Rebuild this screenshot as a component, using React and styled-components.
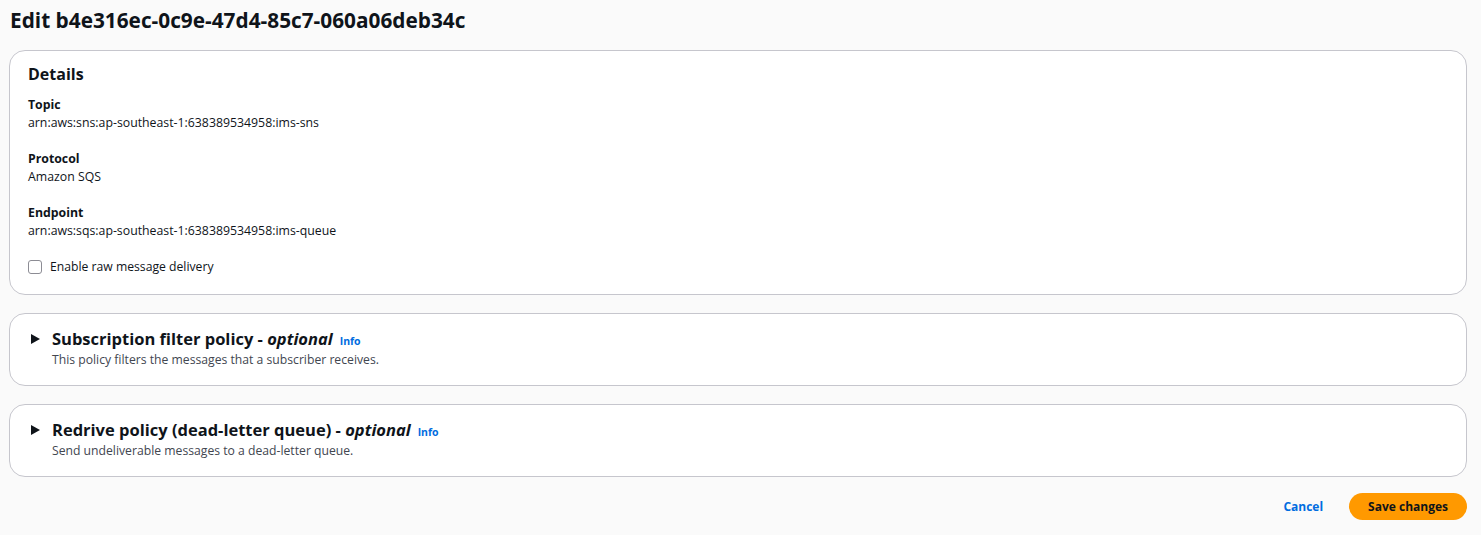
import styled, { createGlobalStyle } from "styled-components";

const Global = createGlobalStyle`
  body {
    margin: 0;
    background: #fafafa;
    font-family: "Open Sans", "Noto Sans", sans-serif;
    color: #0f141a;
  }
`;

const Page = styled.div`
  padding: 6px 14px 0 9px;
  display: flex;
  flex-direction: column;
`;

const Title = styled.h1`
  margin: 0 0 16px 1px;
  font-size: 20.8px;
  line-height: 28px;
  font-weight: 700;
`;

const Stack = styled.div`
  display: flex;
  flex-direction: column;
  gap: 18px;
`;

const Panel = styled.section`
  background: #ffffff;
  border: 1px solid #c6c6cd;
  border-radius: 16px;
  padding: ${(p) => p.$pad || "12px 18px 18px"};
`;

const Heading = styled.h2`
  margin: 0 0 11px;
  font-size: 16px;
  line-height: 22px;
  font-weight: 700;
`;

const Field = styled.div`
  margin-bottom: 18px;
`;

const Label = styled.div`
  font-size: 12.3px;
  line-height: 18px;
  font-weight: 700;
`;

const Value = styled.div`
  font-size: 12.3px;
  line-height: 18px;
`;

const CheckRow = styled.label`
  display: flex;
  align-items: center;
  gap: 8px;
  font-size: 12.2px;
  line-height: 18px;
  margin-top: 3px;
`;

const Box = styled.span`
  width: 12px;
  height: 12px;
  border: 1px solid #8c8c94;
  border-radius: 3px;
  background: #fff;
`;

const ExpHeader = styled.div`
  display: flex;
  align-items: flex-start;
  gap: 12px;
`;

const Caret = styled.svg`
  margin-top: 6px;
  margin-left: 3px;
  flex: none;
`;

const ExpTitle = styled.div`
  font-size: 16.5px;
  line-height: 22px;
  font-weight: 700;
  em {
    font-style: italic;
  }
`;

const Info = styled.a`
  font-size: 10.5px;
  font-weight: 700;
  color: #006ce0;
  margin-left: 7px;
  text-decoration: none;
`;

const Desc = styled.div`
  font-size: 12.2px;
  line-height: 16px;
  color: #424650;
`;

const Actions = styled.div`
  display: flex;
  justify-content: flex-end;
  align-items: center;
  gap: 26px;
  margin-top: 16px;
`;

const LinkButton = styled.button`
  background: none;
  border: none;
  padding: 0;
  font-family: inherit;
  font-size: 12px;
  font-weight: 700;
  color: #006ce0;
`;

const Primary = styled.button`
  background: #ff9900;
  border: none;
  border-radius: 14px;
  height: 27px;
  padding: 0 19px;
  font-family: inherit;
  font-size: 12px;
  font-weight: 700;
  color: #0f141a;
`;

const Expandable = ({ title, desc }) => (
  <Panel $pad="14px 18px 17px">
    <ExpHeader>
      <Caret width="9" height="10" viewBox="0 0 9 10">
        <path d="M0 0 L9 5 L0 10 Z" fill="#0f141a" />
      </Caret>
      <div>
        <ExpTitle>
          {title} - <em>optional</em>
          <Info href="#">Info</Info>
        </ExpTitle>
        <Desc>{desc}</Desc>
      </div>
    </ExpHeader>
  </Panel>
);

export default function App() {
  return (
    <>
      <Global />
      <Page>
        <Title>Edit b4e316ec-0c9e-47d4-85c7-060a06deb34c</Title>
        <Stack>
          <Panel>
            <Heading>Details</Heading>
            <Field>
              <Label>Topic</Label>
              <Value>arn:aws:sns:ap-southeast-1:638389534958:ims-sns</Value>
            </Field>
            <Field>
              <Label>Protocol</Label>
              <Value>Amazon SQS</Value>
            </Field>
            <Field>
              <Label>Endpoint</Label>
              <Value>arn:aws:sqs:ap-southeast-1:638389534958:ims-queue</Value>
            </Field>
            <CheckRow>
              <Box />
              Enable raw message delivery
            </CheckRow>
          </Panel>
          <Expandable
            title="Subscription filter policy"
            desc="This policy filters the messages that a subscriber receives."
          />
          <Expandable
            title="Redrive policy (dead-letter queue)"
            desc="Send undeliverable messages to a dead-letter queue."
          />
        </Stack>
        <Actions>
          <LinkButton>Cancel</LinkButton>
          <Primary>Save changes</Primary>
        </Actions>
      </Page>
    </>
  );
}
